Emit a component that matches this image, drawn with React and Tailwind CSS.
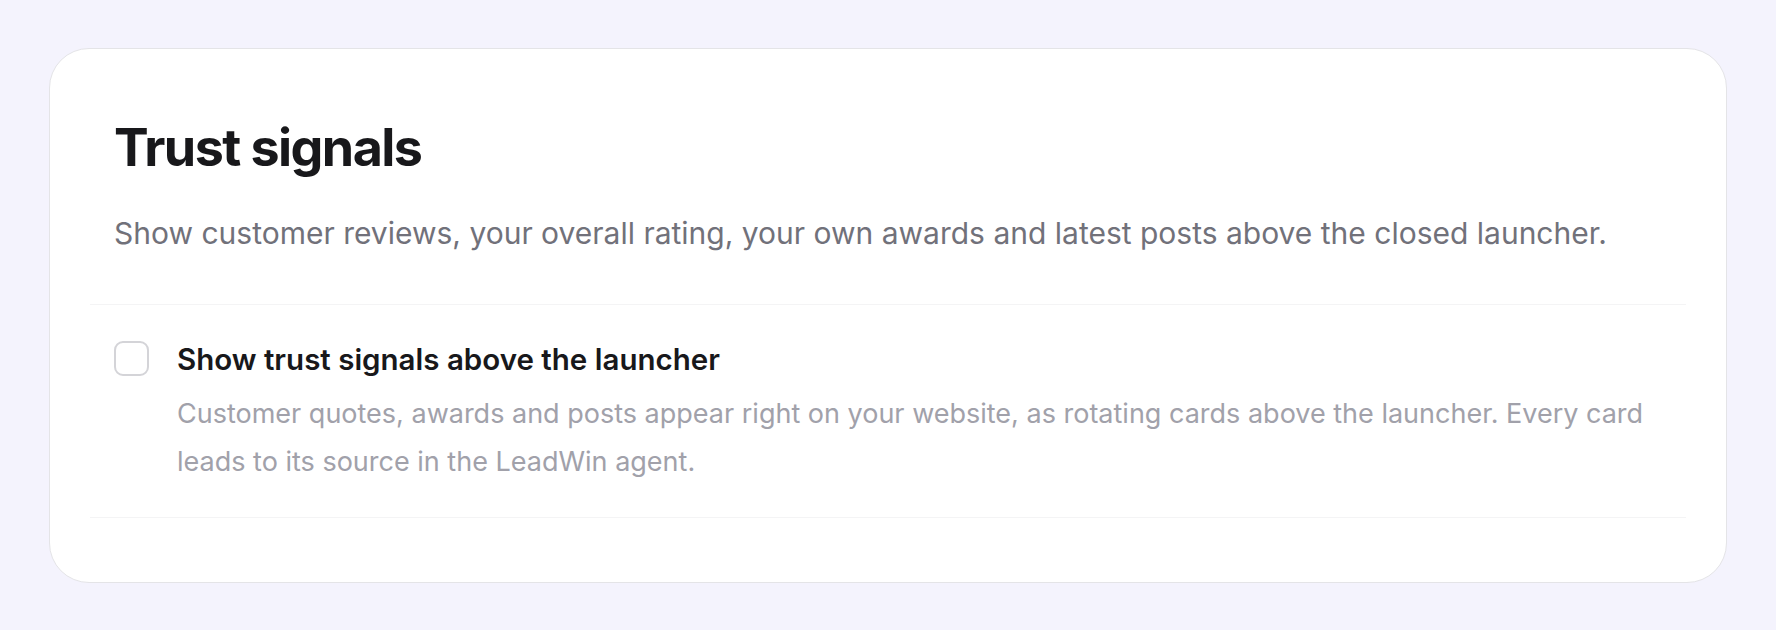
export default function App() {
  return (
    <div className="min-h-screen bg-[#f4f3fd] px-[49px] py-[48px] font-['Inter',sans-serif]">
      <div className="rounded-[40px] border border-[#e4e4e7] bg-white px-10 pt-[67px] pb-[64px]">
        {/* Header */}
        <div className="border-b border-[#f4f4f5] px-6 pb-[51px]">
          <h1 className="text-[52px] font-bold leading-[63px] tracking-[-0.03em] text-[#18181b]">
            Trust signals
          </h1>
          <p className="mt-[34px] text-[30px] leading-[40px] text-[#71717a]">
            Show customer reviews, your overall rating, your own awards and latest posts above the closed launcher.
          </p>
        </div>

        {/* Option row */}
        <div className="flex gap-[28px] border-b border-[#f4f4f5] px-6 pt-[36px] pb-[31px]">
          <div className="h-[35px] w-[35px] shrink-0 rounded-[9px] border-2 border-[#d4d4d8] bg-white" />
          <div className="min-w-0 flex-1">
            <div className="text-[29.5px] font-semibold leading-[36px] text-[#18181b]">
              Show trust signals above the launcher
            </div>
            <p className="mt-[13px] text-[27px] leading-[48px] text-[#a1a1aa]">
              Customer quotes, awards and posts appear right on your website, as rotating cards above the launcher. Every card leads to its source in the LeadWin agent.
            </p>
          </div>
        </div>
      </div>
    </div>
  );
}
